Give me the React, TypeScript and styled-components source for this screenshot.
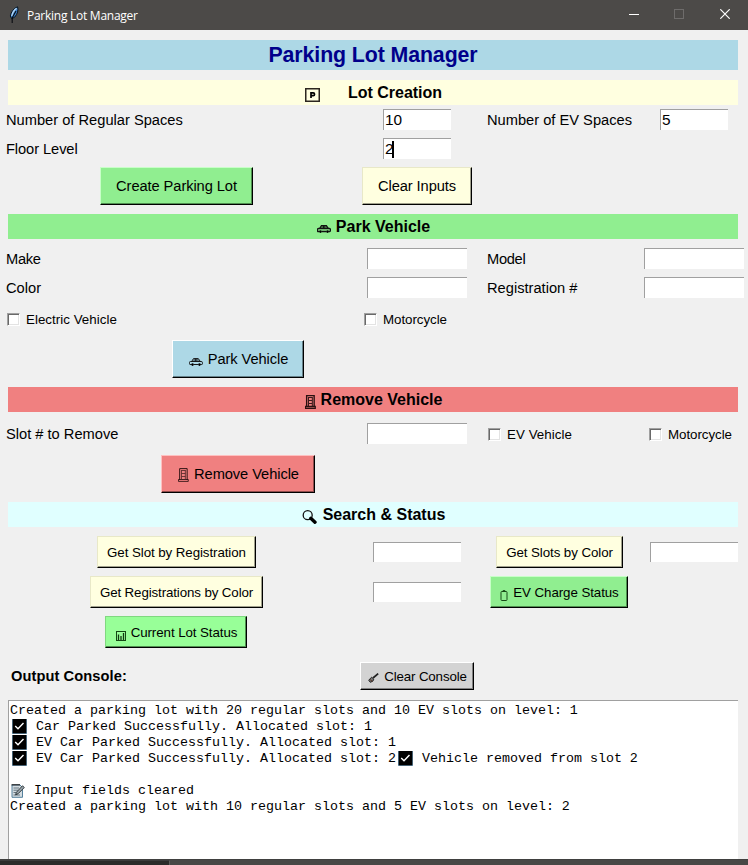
import React from "react";
import styled, { createGlobalStyle } from "styled-components";

const GlobalStyle = createGlobalStyle`
  html, body { margin: 0; padding: 0; overflow: hidden; background: #f0f0f0; }
  * { box-sizing: border-box; }
  svg { display: block; flex: none; }
`;

const Window = styled.main`
  width: 748px;
  height: 865px;
  display: flex;
  flex-direction: column;
  background: #f0f0f0;
  color: #000;
  font-family: "Liberation Sans", Arial, sans-serif;
  font-size: 15px;
  white-space: pre;
  overflow: hidden;
`;

const TitleBar = styled.header`
  height: 30px;
  flex: none;
  display: flex;
  align-items: center;
  padding-left: 8px;
  background: #4c4a48;
  color: #fff;
  font: 12px "Open Sans", "Noto Sans", sans-serif;
`;

const TitleText = styled.span<{ $ls: number }>`
  flex: 1;
  margin-left: 7px;
  letter-spacing: ${(p) => p.$ls}px;
`;

const WindowButton = styled.span<{ $w: number }>`
  width: ${(p) => p.$w}px;
  display: flex;
  justify-content: center;
  padding-bottom: 2px;
`;

const Heading = styled.h1`
  flex: none;
  height: 30px;
  margin: 10px 10px 0 8px;
  background: #add8e6;
  color: #00008b;
  font-size: 21.33px;
  line-height: 30px;
  font-weight: bold;
  letter-spacing: -0.1px;
  text-align: center;
`;

const Band = styled.h2<{ $bg: string; $gap: number; $top: number }>`
  flex: none;
  height: 25px;
  margin: ${(p) => p.$top}px 10px 0 8px;
  padding-left: 1px;
  display: flex;
  justify-content: center;
  align-items: center;
  gap: ${(p) => p.$gap}px;
  background: ${(p) => p.$bg};
  font-size: 16px;
  line-height: 25px;
  font-weight: bold;
`;

const BandIcon = styled.span`
  padding-top: 5px;
`;

const Row = styled.div<{ $h: number; $top: number; $wide?: boolean }>`
  flex: none;
  display: grid;
  grid-template-columns: ${(p) => (p.$wide ? "476px 1fr" : "353px 128px 157px 112px")};
  align-items: center;
  height: ${(p) => p.$h}px;
  margin-top: ${(p) => p.$top}px;
`;

const Cell = styled.div<{ $left?: number; $down?: number }>`
  display: flex;
  align-items: center;
  justify-content: ${(p) => (p.$left === undefined ? "center" : "flex-start")};
  padding-left: ${(p) => p.$left ?? 0}px;
  padding-top: ${(p) => p.$down ?? 0}px;
`;

const Label = styled.span<{ $bold?: boolean; $ls?: number }>`
  font-weight: ${(p) => (p.$bold ? "bold" : "normal")};
  font-size: 14.67px;
  line-height: 20px;
  letter-spacing: ${(p) => p.$ls ?? 0}px;
`;

const Field = styled.div<{ $w: number; $h?: number }>`
  flex: none;
  width: ${(p) => p.$w}px;
  height: ${(p) => p.$h ?? 21}px;
  display: flex;
  align-items: center;
  padding-left: 1px;
  background: #fff;
  border-top: 1px solid #a0a0a0;
  border-left: 1px solid #a0a0a0;
  font-size: 15.4px;
  line-height: 20px;
`;

const Caret = styled.span`
  width: 2px;
  height: 17px;
  margin-left: -1.5px;
  background: #000;
`;

const Button = styled.button<{
  $bg: string;
  $light: string;
  $dark: string;
  $w: number;
  $h: number;
  $small?: boolean;
  $ls?: number;
}>`
  flex: none;
  width: ${(p) => p.$w}px;
  height: ${(p) => p.$h}px;
  display: flex;
  align-items: center;
  justify-content: center;
  gap: 5px;
  margin: 0;
  padding: 0;
  color: #000;
  background: ${(p) => p.$bg};
  border: 1px solid;
  border-color: ${(p) => p.$light} #000 #000 ${(p) => p.$light};
  box-shadow: inset -1px -1px ${(p) => p.$dark};
  font-family: inherit;
  font-size: ${(p) => (p.$small ? 13.33 : 14.67)}px;
  letter-spacing: ${(p) => p.$ls ?? -0.08}px;
  white-space: pre;
`;

const ButtonIcon = styled.span<{ $drop: number }>`
  padding-top: ${(p) => p.$drop}px;
  margin-left: 1px;
`;

const CheckLabel = styled.label<{ $ls: number }>`
  display: flex;
  align-items: center;
  gap: 6px;
  font-size: 13.33px;
  line-height: 16px;
  letter-spacing: ${(p) => p.$ls}px;
`;

const CheckBox = styled.span`
  width: 13px;
  height: 13px;
  background: #fff;
  border: 1px solid;
  border-color: #a0a0a0 #fff #fff #a0a0a0;
  box-shadow: inset 1px 1px #696969, inset -1px -1px #e3e3e3;
`;

const Console = styled.section`
  flex: none;
  height: 159px;
  margin: 10px 10px 0 8px;
  padding: 1px 0 0 1px;
  background: #fff;
  border-top: 1px solid #a0a0a0;
  border-left: 1px solid #a0a0a0;
  font: 13.33px "Liberation Mono", "Courier New", monospace;
`;

const Line = styled.div`
  height: 16px;
  line-height: 16px;
  padding-top: 1px;
  display: flex;
  align-items: center;
`;

const LineIcon = styled.span<{ $before: number; $after: number }>`
  margin-left: ${(p) => p.$before}px;
  margin-right: ${(p) => p.$after}px;
`;

const Taskbar = styled.footer`
  height: 6px;
  flex: none;
  background: #484846;
  border-top: 1px solid #40403f;
`;

const TaskbarSearch = styled.div`
  width: 170px;
  height: 5px;
  background: #2b2b2a;
  border-top: 1px solid #3c3c3c;
  border-right: 1px solid #5c5c5b;
`;

const Feather = () => (
  <svg width="12" height="18" viewBox="0 0 12 18">
    <path d="M9.6 .8 C10.6 4 9.5 8 6.8 11 L3.8 12.8 L2.3 10 C3 6 5.8 2 9.6 .8Z" fill="#3f83cc" stroke="#071521" strokeWidth="1" />
    <path d="M8.6 2.2 C5.7 4.2 4.3 7 3.8 10" fill="none" stroke="#b9daf5" strokeWidth="1.3" />
    <path d="M8 5 L4.2 12 L4.2 17" fill="none" stroke="#080b10" strokeWidth="1.1" />
  </svg>
);

const ParkingIcon = () => (
  <svg width="15" height="14" viewBox="0 0 15 14">
    <rect x=".75" y=".75" width="13.5" height="12.5" fill="none" stroke="#2c2620" strokeWidth="1.5" />
    <path d="M6 10V4.8H8.2C10 4.8 10 7.7 8.2 7.7H6" fill="none" stroke="#000" strokeWidth="1.7" />
  </svg>
);

const CarIcon = ({ weight = 1 }: { weight?: number }) => (
  <svg width="14" height="8" viewBox="0 0 15 8" preserveAspectRatio="none">
    <path d="M3 3.3L4.8 .6H10L12 3.3M7.3 .6V3.3" fill="none" stroke="#111" strokeWidth={weight} />
    <path d="M5.2 1H9.8L10.8 3H4.2Z" fill="#000" opacity=".45" />
    <path d="M3 6.5H1.2Q.5 6.5 .5 5.5V4.4Q.5 3.5 1.7 3.5H13Q14.4 3.5 14.4 4.6V5.7Q14.4 6.5 13.6 6.5H12M5 6.5H10" fill="none" stroke="#111" strokeWidth={weight} />
    <circle cx="3.8" cy="6.6" r="1.3" fill="#000" />
    <circle cx="11.2" cy="6.6" r="1.3" fill="#000" />
  </svg>
);

const DoorIcon = ({ weight = 1 }: { weight?: number }) => (
  <svg width="11" height="14" viewBox="0 0 12 14" preserveAspectRatio="none">
    <path d="M1.8 12V.6H10V12" fill="none" stroke="#2b1111" strokeWidth={weight} />
    <path d="M3.8 2V11M8 2V11M4 2.5H8M4 5.5H8M4 8.5H8" fill="none" stroke="#3c1a1a" strokeWidth={weight * 0.75} />
    <path d="M.5 11.5H11.2V13.4H.5Z" fill="none" stroke="#2b1111" strokeWidth={weight * 0.9} />
  </svg>
);

const MagnifierIcon = () => (
  <svg width="15" height="14" viewBox="0 0 15 14">
    <circle cx="5.7" cy="5.2" r="4.5" fill="none" stroke="#111" strokeWidth="1.3" />
    <path d="M8.8 8.3L13 12.2" stroke="#000" strokeWidth="3.4" strokeLinecap="round" />
  </svg>
);

const BatteryIcon = () => (
  <svg width="8" height="11" viewBox="0 0 8 11">
    <rect x="1" y="1.5" width="6" height="9" rx=".8" fill="none" stroke="#174a17" strokeWidth="1" />
    <path d="M2.8 .7H5.2" stroke="#174a17" strokeWidth="1.2" />
  </svg>
);

const ChartIcon = () => (
  <svg width="10" height="10" viewBox="0 0 10 10">
    <rect x=".5" y=".5" width="9" height="9" fill="none" stroke="#144914" />
    <path d="M2.5 9V3.5M5 9V5M7.5 9V2" stroke="#103810" strokeWidth="1.3" />
  </svg>
);

const BroomIcon = () => (
  <svg width="11" height="10" viewBox="0 0 11 10">
    <path d="M5 5L10.2 .6" stroke="#222" strokeWidth="1.7" />
    <path d="M.7 7.2L3.6 4.2L5.8 6.2L4.8 8.2L2.3 9.3Z" fill="#777" stroke="#222" strokeWidth="1" />
    <path d="M2 6.5L4.4 8.4" stroke="#5c3322" />
  </svg>
);

const CheckIcon = () => (
  <svg width="15" height="15" viewBox="0 0 15 15">
    <rect width="15" height="15" fill="#8ec5e8" />
    <rect x=".5" width="14" height="14.5" fill="#000" />
    <path d="M3.2 7L6 9.7L11.5 4" fill="none" stroke="#fff" strokeWidth="1.4" />
  </svg>
);

const MemoIcon = () => (
  <svg width="14" height="14" viewBox="0 0 14 14">
    <path d="M1 1H9L11.5 3.5V13.3H1Z" fill="#d3dbe0" stroke="#54809c" />
    <path d="M.5 .8H9" stroke="#222" strokeWidth="1.2" />
    <path d="M2.5 4H8M2.5 6.2H7M2.5 8.5H5M2.5 11H9" stroke="#667681" />
    <path d="M4.6 10.8L5.4 8.3L11.5 1.8L13.3 3.5L7 9.8Z" fill="#99a5ac" stroke="#252b2f" strokeWidth=".9" />
  </svg>
);

const yellow = { $bg: "#ffffe0", $light: "#e8e8c8", $dark: "#a0a08c" };
const green = { $bg: "#90ee90", $light: "#c8ffc8", $dark: "#509050" };
const pale = { $bg: "#98ff98", $light: "#80d880", $dark: "#509050" };
const blue = { $bg: "#add8e6", $light: "#fff", $dark: "#66828a" };
const coral = { $bg: "#f08080", $light: "#ffc0c0", $dark: "#904c4c" };
const gray = { $bg: "#d3d3d3", $light: "#fff", $dark: "#808080" };

const Check = ({ text, ls }: { text: string; ls: number }) => (
  <CheckLabel $ls={ls}>
    <CheckBox />
    {text}
  </CheckLabel>
);

export default function App() {
  return (
    <>
      <GlobalStyle />
      <Window>
        <TitleBar>
          <Feather />
          <TitleText $ls={-0.26}>Parking Lot Manager</TitleText>
          <WindowButton $w={46}>
            <svg width="10" height="10"><path d="M0 5.5H10" stroke="#fff" /></svg>
          </WindowButton>
          <WindowButton $w={44}>
            <svg width="10" height="10"><rect x=".5" y=".5" width="9" height="9" fill="none" stroke="#6e6c6b" /></svg>
          </WindowButton>
          <WindowButton $w={47}>
            <svg width="10" height="10"><path d="M.3 .3L9.7 9.7M9.7 .3L.3 9.7" stroke="#fff" strokeWidth="1.2" /></svg>
          </WindowButton>
        </TitleBar>

        <Heading>Parking Lot Manager</Heading>

        <Band $bg="#ffffe0" $gap={28} $top={10}>
          <BandIcon><ParkingIcon /></BandIcon>Lot Creation
        </Band>
        <Row $h={21} $top={4}>
          <Cell $left={6}><Label>Number of Regular Spaces</Label></Cell>
          <Cell><Field $w={68}>10</Field></Cell>
          <Cell $left={6}><Label>Number of EV Spaces</Label></Cell>
          <Cell><Field $w={68}>5</Field></Cell>
        </Row>
        <Row $h={21} $top={8}>
          <Cell $left={6}><Label $ls={-0.08}>Floor Level</Label></Cell>
          <Cell><Field $w={68}>2<Caret /></Field></Cell>
        </Row>
        <Row $h={38} $top={8}>
          <Cell><Button {...green} $w={153} $h={38}>Create Parking Lot</Button></Cell>
          <Cell><Button {...yellow} $w={110} $h={38}>Clear Inputs</Button></Cell>
        </Row>

        <Band $bg="#90ee90" $gap={5} $top={9}>
          <BandIcon><CarIcon weight={1.4} /></BandIcon>Park Vehicle
        </Band>
        <Row $h={21} $top={9}>
          <Cell $left={6}><Label $ls={-0.3}>Make</Label></Cell>
          <Cell><Field $w={100} /></Cell>
          <Cell $left={6}><Label $ls={-0.3}>Model</Label></Cell>
          <Cell><Field $w={100} /></Cell>
        </Row>
        <Row $h={21} $top={8}>
          <Cell $left={6}><Label>Color</Label></Cell>
          <Cell><Field $w={100} /></Cell>
          <Cell $left={6}><Label>Registration #</Label></Cell>
          <Cell><Field $w={100} /></Cell>
        </Row>
        <Row $h={21} $top={11}>
          <Cell $left={7}><Check text="Electric Vehicle" ls={0.03} /></Cell>
          <Cell $left={11}><Check text="Motorcycle" ls={-0.05} /></Cell>
        </Row>
        <Row $h={38} $top={10} $wide>
          <Cell>
            <Button {...blue} $w={132} $h={38}>
              <ButtonIcon $drop={6}><CarIcon /></ButtonIcon>Park Vehicle
            </Button>
          </Cell>
        </Row>

        <Band $bg="#f08080" $gap={5} $top={9}>
          <BandIcon><DoorIcon weight={1.5} /></BandIcon>Remove Vehicle
        </Band>
        <Row $h={21} $top={11}>
          <Cell $left={6}><Label>Slot # to Remove</Label></Cell>
          <Cell><Field $w={100} /></Cell>
          <Cell $left={7} $down={2}><Check text="EV Vehicle" ls={0.05} /></Cell>
          <Cell $left={11} $down={2}><Check text="Motorcycle" ls={-0.05} /></Cell>
        </Row>
        <Row $h={38} $top={11} $wide>
          <Cell>
            <Button {...coral} $w={154} $h={38}>
              <ButtonIcon $drop={2}><DoorIcon /></ButtonIcon>Remove Vehicle
            </Button>
          </Cell>
        </Row>

        <Band $bg="#e0ffff" $gap={6} $top={9}>
          <BandIcon><MagnifierIcon /></BandIcon>Search &amp; Status
        </Band>
        <Row $h={32} $top={9}>
          <Cell><Button {...yellow} $small $w={159} $h={32}>Get Slot by Registration</Button></Cell>
          <Cell><Field $w={88} $h={20} /></Cell>
          <Cell><Button {...yellow} $small $w={127} $h={32}>Get Slots by Color</Button></Cell>
          <Cell><Field $w={88} $h={20} /></Cell>
        </Row>
        <Row $h={32} $top={8}>
          <Cell><Button {...yellow} $small $w={173} $h={32} $ls={-0.12}>Get Registrations by Color</Button></Cell>
          <Cell><Field $w={88} $h={20} /></Cell>
          <Cell $left={9}>
            <Button {...green} $small $w={138} $h={32}>
              <ButtonIcon $drop={6}><BatteryIcon /></ButtonIcon>EV Charge Status
            </Button>
          </Cell>
        </Row>
        <Row $h={32} $top={8}>
          <Cell $left={105}>
            <Button {...pale} $small $w={142} $h={32}>
              <ButtonIcon $drop={7}><ChartIcon /></ButtonIcon>Current Lot Status
            </Button>
          </Cell>
        </Row>
        <Row $h={28} $top={14}>
          <Cell $left={11}><Label $bold $ls={0.07}>Output Console:</Label></Cell>
          <Cell>
            <Button {...gray} $small $w={114} $h={28} $ls={-0.15}>
              <ButtonIcon $drop={4}><BroomIcon /></ButtonIcon>Clear Console
            </Button>
          </Cell>
        </Row>

        <Console>
          <Line>Created a parking lot with 20 regular slots and 10 EV slots on level: 1</Line>
          <Line><LineIcon $before={2} $after={9}><CheckIcon /></LineIcon>Car Parked Successfully. Allocated slot: 1</Line>
          <Line><LineIcon $before={2} $after={9}><CheckIcon /></LineIcon>EV Car Parked Successfully. Allocated slot: 1</Line>
          <Line>
            <LineIcon $before={2} $after={9}><CheckIcon /></LineIcon>EV Car Parked Successfully. Allocated slot: 2
            <LineIcon $before={2} $after={9}><CheckIcon /></LineIcon>Vehicle removed from slot 2
          </Line>
          <Line />
          <Line><LineIcon $before={1} $after={9}><MemoIcon /></LineIcon>Input fields cleared</Line>
          <Line>Created a parking lot with 10 regular slots and 5 EV slots on level: 2</Line>
        </Console>
        <Taskbar><TaskbarSearch /></Taskbar>
      </Window>
    </>
  );
}
